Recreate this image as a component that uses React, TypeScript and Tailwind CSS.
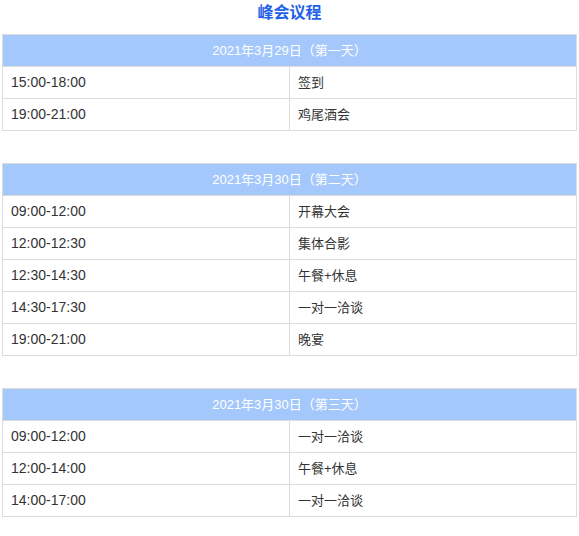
import React from 'react';

type Day = { title: string; rows: [string, string][] };

const days: Day[] = [
  {
    title: '2021年3月29日（第一天）',
    rows: [
      ['15:00-18:00', '签到'],
      ['19:00-21:00', '鸡尾酒会'],
    ],
  },
  {
    title: '2021年3月30日（第二天）',
    rows: [
      ['09:00-12:00', '开幕大会'],
      ['12:00-12:30', '集体合影'],
      ['12:30-14:30', '午餐+休息'],
      ['14:30-17:30', '一对一洽谈'],
      ['19:00-21:00', '晚宴'],
    ],
  },
  {
    title: '2021年3月30日（第三天）',
    rows: [
      ['09:00-12:00', '一对一洽谈'],
      ['12:00-14:00', '午餐+休息'],
      ['14:00-17:00', '一对一洽谈'],
    ],
  },
];

const font = { fontFamily: '"Liberation Sans", "Noto Sans CJK SC", sans-serif' };

const App = () => {
  return (
    <div className="w-[579px] min-h-[536px] bg-white text-[#333]" style={font}>
      <div className="h-[34px] pt-[3px] text-center">
        <h1 className="text-[16px] leading-[20px] font-bold text-[#1f62e8]">峰会议程</h1>
      </div>

      <div className="flex flex-col gap-[32px]">
        {days.map((day) => (
          <div key={day.title} className="mx-[2px] w-[575px] border border-[#dcdcdc]">
            <div className="h-[31px] flex items-center justify-center bg-[#a4c8fb] text-white text-[13px]">
              {day.title}
            </div>
            {day.rows.map(([time, item]) => (
              <div key={time + item} className="grid grid-cols-[286px_1fr] border-t border-[#dcdcdc]">
                <div className="h-[31px] flex items-center pl-[8px] text-[14px]">{time}</div>
                <div className="h-[31px] flex items-center pl-[8px] border-l border-[#dcdcdc] text-[13px]">{item}</div>
              </div>
            ))}
          </div>
        ))}
      </div>
    </div>
  );
};

export default App;
